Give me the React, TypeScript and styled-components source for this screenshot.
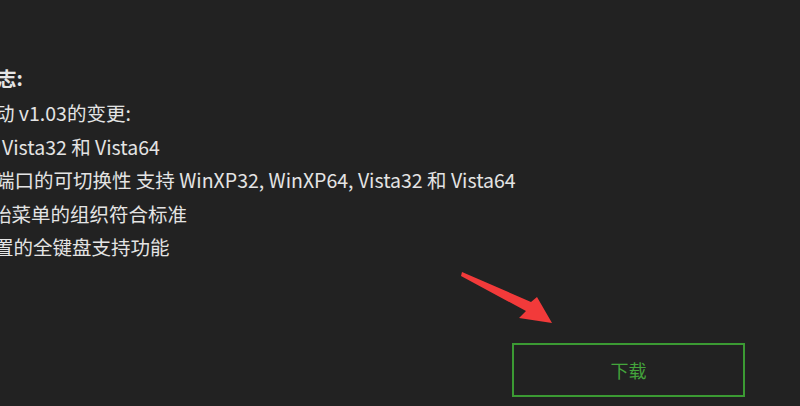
import React from "react";
import styled, { createGlobalStyle } from "styled-components";

const Global = createGlobalStyle`
  html, body { margin: 0; padding: 0; background: #222222; }
  #root { width: 800px; height: 406px; }
`;

const Page = styled.div`
  position: relative;
  width: 800px;
  height: 406px;
  overflow: hidden;
  background: #222222;
  display: flex;
  flex-direction: column;
  font-family: "Noto Sans CJK SC", "Noto Sans", sans-serif;
  color: #e4e4e4;
`;

const Notes = styled.div`
  display: flex;
  flex-direction: column;
  padding-top: 61px;
`;

const Line = styled.div<{ $shift: number; $bold?: boolean; $gap?: number }>`
  font-size: 19.5px;
  line-height: 33.5px;
  white-space: nowrap;
  margin-left: ${(p) => p.$shift}px;
  margin-bottom: ${(p) => p.$gap ?? 0}px;
  font-weight: ${(p) => (p.$bold ? 700 : 400)};
`;

const Footer = styled.div`
  display: flex;
  padding-left: 512px;
  margin-top: 79px;
`;

const DownloadButton = styled.button`
  width: 233px;
  height: 54px;
  box-sizing: border-box;
  background: transparent;
  border: 2px solid #3b9a33;
  color: #44a53c;
  font-family: "Noto Sans CJK SC", sans-serif;
  font-size: 18px;
  display: flex;
  align-items: center;
  justify-content: center;
  padding: 0;
  cursor: pointer;
`;

const Arrow = styled.svg`
  position: absolute;
  left: 455px;
  top: 265px;
`;

export default function App() {
  return (
    <Page>
      <Global />
      <Notes>
        <Line $shift={-3} $bold $gap={1.5}>志:</Line>
        <Line $shift={-5}>动 v1.03的变更:</Line>
        <Line $shift={2}>Vista32 和 Vista64</Line>
        <Line $shift={-5}>端口的可切换性 支持 WinXP32, WinXP64, Vista32 和 Vista64</Line>
        <Line $shift={-8}>始菜单的组织符合标准</Line>
        <Line $shift={-6}>置的全键盘支持功能</Line>
      </Notes>
      <Footer>
        <DownloadButton>下载</DownloadButton>
      </Footer>
      <Arrow width="105" height="65" viewBox="455 265 105 65">
        <polygon
          points="462,272 531,302 537,297 552,323 519,318 526,311 461,276"
          fill="#f23a3a"
        />
      </Arrow>
    </Page>
  );
}
